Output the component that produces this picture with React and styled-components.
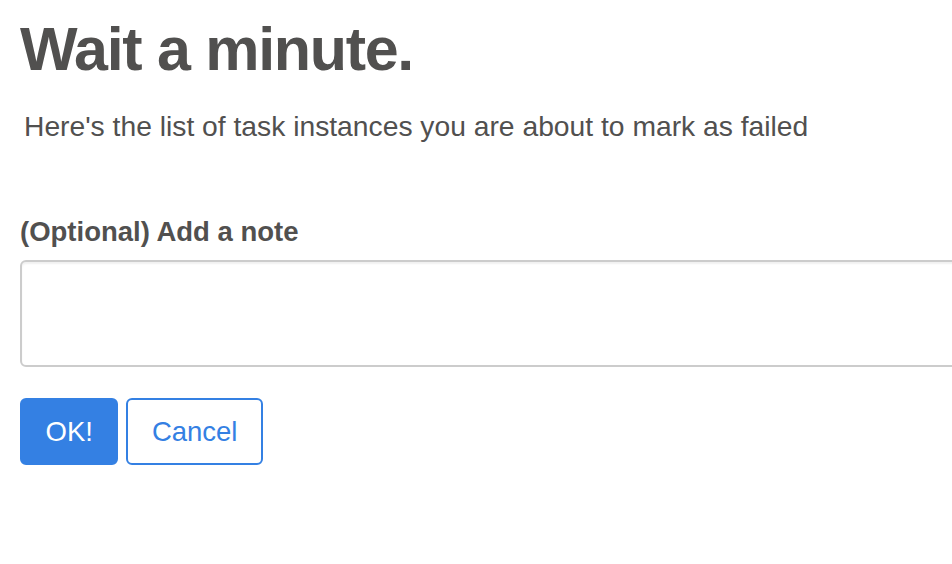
import React from 'react';
import styled, { createGlobalStyle } from 'styled-components';

const GlobalStyle = createGlobalStyle`
  body {
    margin: 0;
    background: #fff;
    font-family: "Liberation Sans", Arial, sans-serif;
    color: #51504f;
  }
`

const Page = styled.div`
  padding: 0 0 0 20px;
  overflow: hidden;
`

const Title = styled.h1`
  margin: 13px 0 0;
  font-size: 61px;
  font-weight: 700;
  line-height: 72px;
  letter-spacing: -1.3px;
`

const Intro = styled.p`
  margin: 24px 0 0 4px;
  font-size: 28.25px;
  line-height: 34px;
`

const Form = styled.form`
  margin-top: 72px;
`

const Label = styled.label`
  display: block;
  font-size: 27.5px;
  font-weight: 700;
  line-height: 34px;
  margin-bottom: 11px;
`

const Note = styled.textarea`
  display: block;
  box-sizing: border-box;
  width: 1000px;
  height: 107px;
  border: 2px solid #ccc;
  border-radius: 6px;
  box-shadow: inset 0 2px 2px rgba(0, 0, 0, 0.06);
  resize: none;
  outline: none;
  font: inherit;
`

const Actions = styled.div`
  display: flex;
  gap: 8px;
  margin-top: 31px;
`

const Button = styled.button`
  box-sizing: border-box;
  height: 67px;
  padding: 0 23.5px;
  border-radius: 6px;
  font-family: "Liberation Sans", Arial, sans-serif;
  font-size: 27.5px;
  cursor: pointer;
  border: 2px solid #3480e3;
  background: ${p => (p.primary ? '#3480e3' : '#fff')};
  color: ${p => (p.primary ? '#fff' : '#3480e3')};
`

export default function App() {
  return (
    <Page>
      <GlobalStyle />
      <Title>Wait a minute.</Title>
      <Intro>Here's the list of task instances you are about to mark as failed</Intro>
      <Form onSubmit={e => e.preventDefault()}>
        <Label htmlFor="note">(Optional) Add a note</Label>
        <Note id="note" />
        <Actions>
          <Button primary type="submit">OK!</Button>
          <Button type="button">Cancel</Button>
        </Actions>
      </Form>
    </Page>
  );
}
